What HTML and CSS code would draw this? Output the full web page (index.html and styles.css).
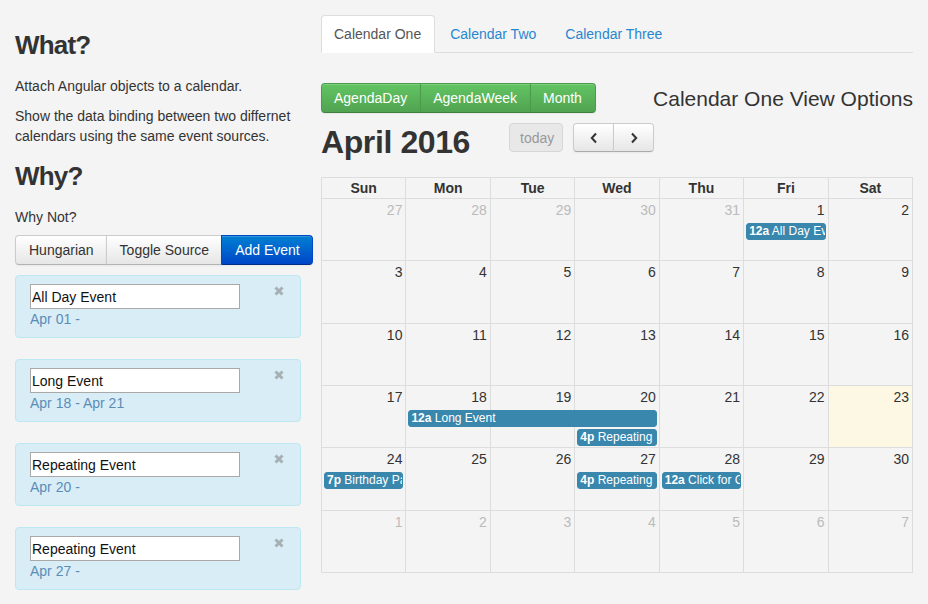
FILE: index.html
```html
<!DOCTYPE html>
<html lang="en">

<head>
  <meta charset="utf-8" />
  <title>Angular UI Calendar</title>
  <link rel="stylesheet" href="styles.css">
</head>

<body>
  <div class="page">
    <!-- left column: intro + event list -->
    <div class="side">
      <h2 class="head">What?</h2>
      <p>Attach Angular objects to a calendar.</p>
      <p>Show the data binding between two differnet calendars using the same event sources.</p>
      <h2 class="head">Why?</h2>
      <p class="why-not">Why Not?</p>
      <div class="btn-group">
        <button class="btn">Hungarian</button>
        <button class="btn">Toggle Source</button>
        <button class="btn btn-primary">Add Event</button>
      </div>
      <ul class="events">
        <li class="alert">
          <input type="text" value="All Day Event" />
          <span class="close"><svg width="10" height="10" viewBox="0 0 10 10"><path d="M1.5 1.5l7 7M8.5 1.5l-7 7" stroke="#a6b0b5" stroke-width="3" /></svg></span>
          <div class="when">Apr 01 -</div>
        </li>
        <li class="alert">
          <input type="text" value="Long Event" />
          <span class="close"><svg width="10" height="10" viewBox="0 0 10 10"><path d="M1.5 1.5l7 7M8.5 1.5l-7 7" stroke="#a6b0b5" stroke-width="3" /></svg></span>
          <div class="when">Apr 18 - Apr 21</div>
        </li>
        <li class="alert">
          <input type="text" value="Repeating Event" />
          <span class="close"><svg width="10" height="10" viewBox="0 0 10 10"><path d="M1.5 1.5l7 7M8.5 1.5l-7 7" stroke="#a6b0b5" stroke-width="3" /></svg></span>
          <div class="when">Apr 20 -</div>
        </li>
        <li class="alert">
          <input type="text" value="Repeating Event" />
          <span class="close"><svg width="10" height="10" viewBox="0 0 10 10"><path d="M1.5 1.5l7 7M8.5 1.5l-7 7" stroke="#a6b0b5" stroke-width="3" /></svg></span>
          <div class="when">Apr 27 -</div>
        </li>
      </ul>
    </div>

    <!-- right column: tabs + calendar -->
    <div class="main">
      <ul class="tabs">
        <li class="active"><a href="#">Calendar One</a></li>
        <li><a href="#">Calendar Two</a></li>
        <li><a href="#">Calendar Three</a></li>
      </ul>

      <div class="toolbar">
        <div class="btn-group green">
          <button class="btn">AgendaDay</button>
          <button class="btn">AgendaWeek</button>
          <button class="btn">Month</button>
        </div>
        <h3 class="view-title">Calendar One View Options</h3>
      </div>

      <div class="cal-head">
        <h2 class="cal-title">April 2016</h2>
        <button class="fc-btn fc-today" disabled>today</button>
        <div class="fc-group">
          <button class="fc-btn"><svg width="8" height="12" viewBox="0 0 8 12"><path d="M6 1.5 1.8 6 6 10.5" fill="none" stroke="#333" stroke-width="2" /></svg></button>
          <button class="fc-btn"><svg width="8" height="12" viewBox="0 0 8 12"><path d="M2 1.5 6.2 6 2 10.5" fill="none" stroke="#333" stroke-width="2" /></svg></button>
        </div>
      </div>

      <div class="month">
        <div class="dow">
          <div>Sun</div><div>Mon</div><div>Tue</div><div>Wed</div><div>Thu</div><div>Fri</div><div>Sat</div>
        </div>
        <div class="week">
          <div class="day other">27</div><div class="day other">28</div><div class="day other">29</div><div class="day other">30</div><div class="day other">31</div><div class="day">1</div><div class="day">2</div>
          <div class="ev c6 r1"><b>12a</b> All Day Event</div>
        </div>
        <div class="week">
          <div class="day">3</div><div class="day">4</div><div class="day">5</div><div class="day">6</div><div class="day">7</div><div class="day">8</div><div class="day">9</div>
        </div>
        <div class="week">
          <div class="day">10</div><div class="day">11</div><div class="day">12</div><div class="day">13</div><div class="day">14</div><div class="day">15</div><div class="day">16</div>
        </div>
        <div class="week">
          <div class="day">17</div><div class="day">18</div><div class="day">19</div><div class="day">20</div><div class="day">21</div><div class="day">22</div><div class="day is-today">23</div>
          <div class="ev c2 span3 r1"><b>12a</b> Long Event</div>
          <div class="ev c4 r2"><b>4p</b> Repeating Event</div>
        </div>
        <div class="week">
          <div class="day">24</div><div class="day">25</div><div class="day">26</div><div class="day">27</div><div class="day">28</div><div class="day">29</div><div class="day">30</div>
          <div class="ev c1 r1"><b>7p</b> Birthday Party</div>
          <div class="ev c4 r1"><b>4p</b> Repeating Event</div>
          <div class="ev c5 r1"><b>12a</b> Click for Google</div>
        </div>
        <div class="week">
          <div class="day other">1</div><div class="day other">2</div><div class="day other">3</div><div class="day other">4</div><div class="day other">5</div><div class="day other">6</div><div class="day other">7</div>
        </div>
      </div>
    </div>
  </div>
</body>

</html>
```

FILE: styles.css
```css
*{box-sizing:border-box;}
body{margin:0;background:#f4f4f4;font:14px/20px "Liberation Sans",Arial,sans-serif;color:#333;}
p{margin:0 0 10px;}
ul{margin:0;padding:0;list-style:none;}

.page{display:flex;gap:20px;padding:15px;}
.side{width:286px;flex:none;}
.main{width:592px;flex:none;}

.head{font-size:26px;line-height:29px;letter-spacing:-0.8px;font-weight:bold;margin:16px 0;}
.why-not{margin-bottom:8px;}

/* buttons */
.btn-group{display:flex;width:max-content;white-space:nowrap;}
.btn{font:14px/20px "Liberation Sans",Arial,sans-serif;padding:4px 12px;color:#333;border:1px solid #ccc;border-bottom-color:#b3b3b3;background:linear-gradient(#fff,#e6e6e6);box-shadow:inset 0 1px 0 rgba(255,255,255,.2),0 1px 2px rgba(0,0,0,.05);border-radius:0;}
.btn-group .btn+.btn{margin-left:-1px;}
.btn-group .btn:first-child{border-radius:4px 0 0 4px;}
.btn-group .btn:last-child{border-radius:0 4px 4px 0;}
.btn-primary{color:#fff;background:linear-gradient(#0080d2,#0046c8);border-color:#0046c8 #0046c8 #002e88;}
.side .btn{padding:4px 12px 4px 13px;}
.side .btn-group{margin-bottom:10px;}

/* event list */
.alert{position:relative;background:#d9edf7;border:1px solid #bce8f1;border-radius:4px;padding:8px 35px 8px 14px;margin-bottom:21px;}
.alert input{display:block;width:210px;height:25px;border:1px solid #a9a9a9;background:#fff;padding:1px 1px;font:14px "Liberation Sans",Arial,sans-serif;color:#111;}
.alert .when{color:#5b8cb6;}
.alert .close{position:absolute;top:10px;right:16px;width:10px;height:10px;line-height:0;}

/* tabs */
.tabs{display:flex;border-bottom:1px solid #ddd;margin-bottom:30px;}
.tabs li{margin:0 2px -1px 0;}
.tabs a{display:block;padding:8px 13px 8px 12px;line-height:20px;border:1px solid transparent;border-radius:4px 4px 0 0;color:#2a86cf;text-decoration:none;}
.tabs .active a{background:#fff;border-color:#ddd #ddd transparent;color:#555;}

/* toolbar */
.toolbar{display:flex;justify-content:space-between;align-items:center;height:30px;margin-bottom:10px;}
.green .btn{padding:4px 13px 4px 12px;color:#fff;background:linear-gradient(#62c462,#51a351);border-color:#4c9a4c #4c9a4c #3e7f3e;}
.view-title{margin:0;font-size:21px;line-height:23px;font-weight:normal;}

.cal-head{display:flex;align-items:flex-start;margin-bottom:17px;}
.cal-title{width:188px;margin:2px 0 0;font-size:32px;line-height:35px;letter-spacing:-0.4px;font-weight:bold;}
.fc-btn{height:29px;padding:0 10px;font:14px "Liberation Sans",Arial,sans-serif;color:#333;border:1px solid #ccc;border-bottom-color:#aaa;border-radius:4px;background:linear-gradient(#fff,#e6e6e6);box-shadow:inset 0 1px 0 rgba(255,255,255,.2),0 1px 2px rgba(0,0,0,.05);}
.fc-btn svg{display:block;}
.fc-today{width:54px;color:#999;background:#e8e8e8;border-color:#d6d6d6;box-shadow:none;}
.fc-group{display:flex;margin-left:10px;}
.fc-group .fc-btn{width:41px;padding:0;display:flex;align-items:center;justify-content:center;}
.fc-group .fc-btn:first-child{border-radius:4px 0 0 4px;}
.fc-group .fc-btn:last-child{border-radius:0 4px 4px 0;margin-left:-1px;}

/* month grid */
.month{display:grid;grid-template-rows:21px repeat(6,1fr);height:396px;border-top:1px solid #ddd;border-left:1px solid #ddd;}
.dow,.week{display:grid;grid-template-columns:repeat(7,minmax(0,1fr));}
.dow div{text-align:center;font-weight:bold;line-height:20px;border-right:1px solid #ddd;border-bottom:1px solid #ddd;}
.week{grid-template-rows:24px 18px 18px 1fr;}
.day{grid-row:1 / -1;text-align:right;padding:1px 3px 0 0;border-right:1px solid #ddd;border-bottom:1px solid #ddd;}
.day:nth-child(1){grid-column:1;}
.day:nth-child(2){grid-column:2;}
.day:nth-child(3){grid-column:3;}
.day:nth-child(4){grid-column:4;}
.day:nth-child(5){grid-column:5;}
.day:nth-child(6){grid-column:6;}
.day:nth-child(7){grid-column:7;}
.day.other{color:#bbb;}
.day.is-today{background:#fcf8e3;}

.ev{height:17px;margin:0 3px 0 2px;padding:0 2px;background:#3a87ad;border:1px solid #3a87ad;border-radius:3px;color:#fff;font-size:12px;line-height:15px;white-space:nowrap;overflow:hidden;}
.ev.r1{grid-row:2;}
.ev.r2{grid-row:3;margin-top:1px;}
.c1{grid-column:1;}
.c2{grid-column:2;}
.c4{grid-column:4;}
.c5{grid-column:5;}
.c6{grid-column:6;}
.c2.span3{grid-column:2 / span 3;}
```
